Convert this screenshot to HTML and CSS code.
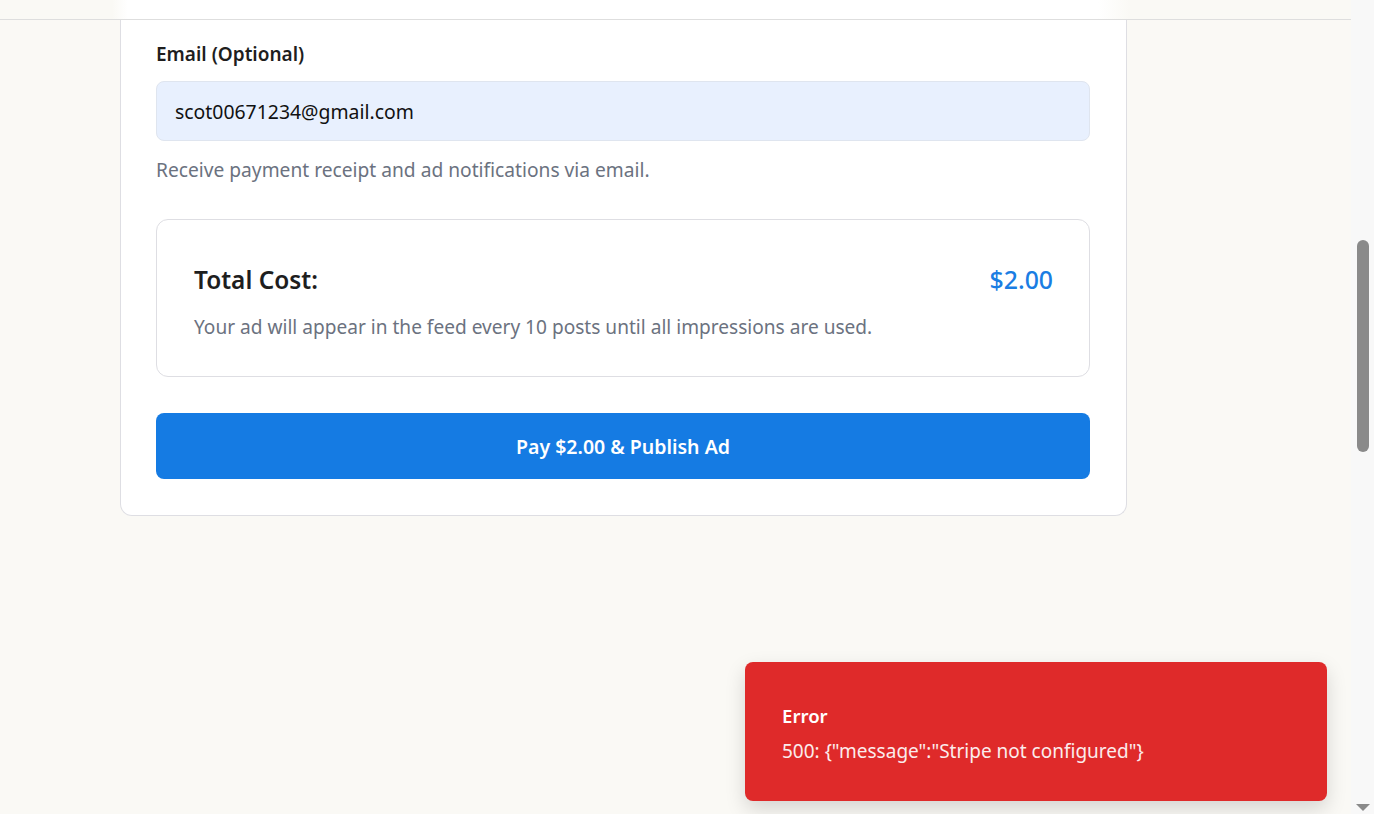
FILE: index.html
```html
<!DOCTYPE html>
<html lang="en">
<head>
<meta charset="utf-8">
<title>Create Ad - Payment</title>
<link rel="stylesheet" href="styles.css">
</head>
<body>
<div class="viewport">
  <div class="main">
    <div class="topbar"></div>
    <div class="content">
      <section class="card">
        <label class="field-label" for="email">Email (Optional)</label>
        <div class="input" id="email">scot00671234@gmail.com</div>
        <p class="help">Receive payment receipt and ad notifications via email.</p>
        <div class="total">
          <div class="total-row">
            <span class="total-label">Total Cost:</span>
            <span class="total-price">$2.00</span>
          </div>
          <p class="total-desc">Your ad will appear in the feed every 10 posts until all impressions are used.</p>
        </div>
        <button class="pay">Pay $2.00 &amp; Publish Ad</button>
      </section>
    </div>
    <div class="toast">
      <div class="toast-title">Error</div>
      <div class="toast-msg">500: {"message":"Stripe not configured"}</div>
    </div>
  </div>
  <div class="scrollbar">
    <div class="track"><div class="thumb"></div></div>
    <div class="arrow"></div>
  </div>
</div>
</body>
</html>
```
FILE: styles.css
```css
* { box-sizing: border-box; }
html, body { margin: 0; padding: 0; height: 100%; }
body {
  font-family: "Noto Sans", "Open Sans", sans-serif;
  background: #faf9f5;
  color: #1f2328;
  overflow: hidden;
}
.viewport { display: flex; height: 814px; }
.main { flex: 1; position: relative; display: flex; flex-direction: column; }
.topbar {
  height: 20px;
  flex: none;
  border-bottom: 1px solid #dedede;
  background: linear-gradient(to right, #faf9f5 0, #faf9f5 112px, #ffffff 128px, #ffffff 1098px, #faf9f5 1130px, #faf9f5 100%);
}
.content { padding-left: 120px; }
.card {
  width: 1007px;
  background: #fff;
  border: 1px solid #dedee3;
  border-top: none;
  border-radius: 0 0 12px 12px;
  padding: 22px 36px 36px 35px;
}
.field-label {
  display: block;
  font-size: 19px;
  line-height: 24px;
  font-weight: 600;
  color: #1e1e1e;
  margin-bottom: 15px;
}
.input {
  height: 60px;
  background: #e8f0fe;
  border: 1px solid #dfe5ef;
  border-radius: 8px;
  padding: 0 18px;
  display: flex;
  align-items: center;
  font-size: 19.4px;
  color: #111;
}
.help {
  margin: 17px 0 0;
  font-size: 19.2px;
  line-height: 24px;
  color: #6b7280;
}
.total {
  margin-top: 37px;
  border: 1px solid #dedee3;
  border-radius: 12px;
  padding: 43px 36px 37px 37px;
}
.total-row { display: flex; justify-content: space-between; align-items: center; height: 32px; }
.total-label { font-size: 24.4px; font-weight: 600; color: #1e1e1e; }
.total-price { font-size: 24.8px; font-weight: 500; color: #1a7de3; }
.total-desc { margin: 20px 0 0; font-size: 19.1px; line-height: 24px; color: #6b7280; }
.pay {
  display: block;
  width: 100%;
  margin-top: 36px;
  height: 66px;
  border: none;
  border-radius: 8px;
  background: #157be3;
  color: #fff;
  font-family: inherit;
  font-size: 19.5px;
  font-weight: 600;
}
.toast {
  position: absolute;
  right: 24px;
  bottom: 13px;
  width: 582px;
  height: 139px;
  background: #df2a2a;
  border-radius: 8px;
  box-shadow: 0 8px 20px rgba(0,0,0,0.15);
  padding: 42px 37px 0;
  color: #fff;
}
.toast-title { font-size: 18.6px; line-height: 24px; font-weight: 600; }
.toast-msg { margin-top: 11px; font-size: 19px; line-height: 24px; color: #fbecec; }
.scrollbar {
  width: 23px;
  flex: none;
  background: #f8f8f8;
  display: flex;
  flex-direction: column;
  align-items: center;
}
.track { flex: 1; width: 100%; padding-top: 240px; display: flex; justify-content: center; }
.thumb { width: 12px; height: 212px; background: #8a8a8a; border-radius: 6px; }
.arrow {
  width: 0; height: 0;
  border-left: 7px solid transparent;
  border-right: 7px solid transparent;
  border-top: 7px solid #8a8a8a;
  margin-bottom: 3px;
}
```
